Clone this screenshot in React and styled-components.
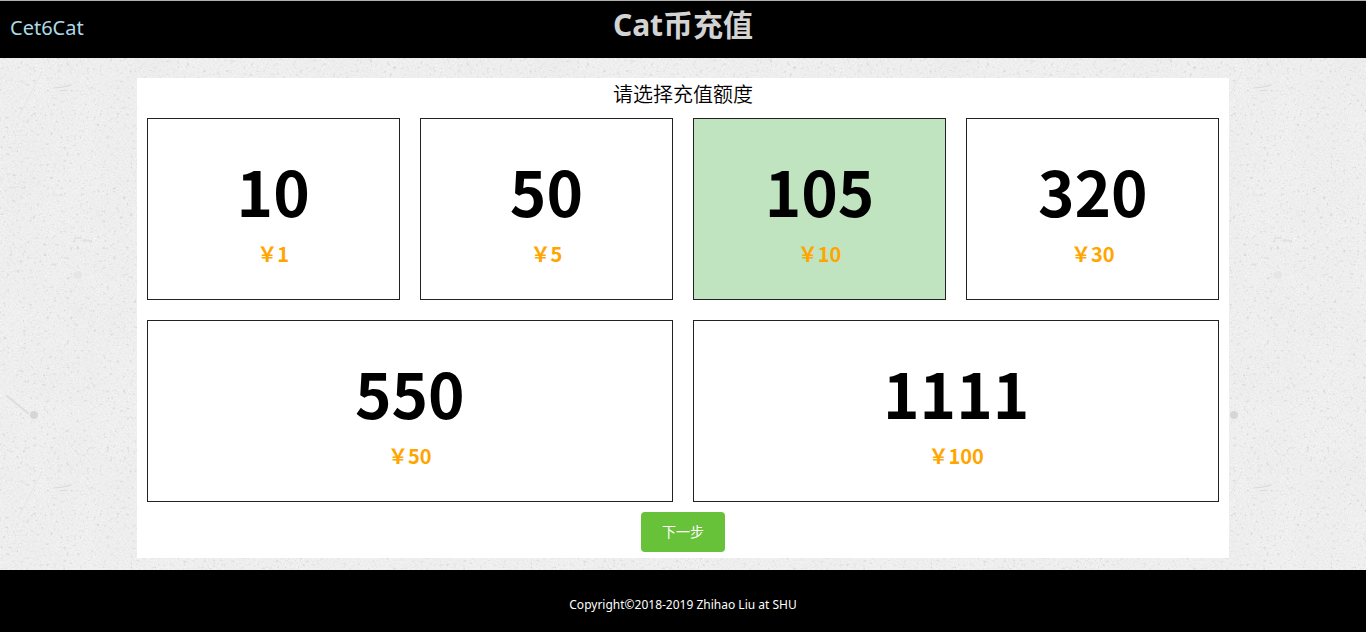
import React, { useState } from "react";
import styled, { createGlobalStyle } from "styled-components";

const texture = `
<svg xmlns="http://www.w3.org/2000/svg" width="400" height="400">
  <filter id="grain" x="0" y="0" width="100%" height="100%" color-interpolation-filters="sRGB">
    <feTurbulence type="fractalNoise" baseFrequency="0.6" numOctaves="3" seed="7" stitchTiles="stitch"/>
    <feColorMatrix values="0.08 0 0 0 0.897  0.08 0 0 0 0.897  0.08 0 0 0 0.897  0 0 0 0 1"/>
  </filter>
  <filter id="specks" x="0" y="0" width="100%" height="100%" color-interpolation-filters="sRGB">
    <feTurbulence type="fractalNoise" baseFrequency="0.3" numOctaves="4" seed="21" stitchTiles="stitch"/>
    <feColorMatrix values="0 0 0 0 0.72  0 0 0 0 0.72  0 0 0 0 0.72  0 5 0 0 -3.2"/>
  </filter>
  <filter id="clouds" x="0" y="0" width="100%" height="100%" color-interpolation-filters="sRGB">
    <feTurbulence type="fractalNoise" baseFrequency="0.02" numOctaves="4" seed="3" stitchTiles="stitch"/>
    <feColorMatrix values="0 0 0 0 0.8  0 0 0 0 0.8  0 0 0 0 0.8  0 1 0 0 -0.4"/>
  </filter>
  <rect width="400" height="400" filter="url(#grain)"/>
  <rect width="400" height="400" filter="url(#clouds)" opacity="0.15"/>
  <rect width="400" height="400" filter="url(#specks)" opacity="0.4"/>
  <g fill="none" stroke="#dedede" stroke-linecap="round">
    <path d="M7 -4L28 13" stroke-width="2"/>
    <path d="M7 396L14 401" stroke-width="2"/>
    <path d="M54 88l9-1 8-2M60 91l7-1" stroke="#d8d8d8"/>
    <path d="M58 64l3 9M66 64l10 7M86 84l7 11M42 72L18 118" stroke="#e6e6e6"/>
    <path d="M75 238h6M84 240l6 1" stroke="#e2e2e2" stroke-width="2"/>
  </g>
  <circle cx="34" cy="15" r="4" fill="#d6d6d6"/>
  <circle cx="78" cy="275" r="4" fill="#e6e6e6"/>
</svg>`;

const GlobalStyle = createGlobalStyle`
  * {
    box-sizing: border-box;
  }

  body {
    margin: 0;
    font-family: "Noto Sans", "Noto Sans CJK SC", sans-serif;
    background: #efefef url("data:image/svg+xml,${encodeURIComponent(texture)}");
  }
`;

const Page = styled.div`
  display: flex;
  flex-direction: column;
  min-height: 100vh;
`;

const Header = styled.header`
  display: grid;
  grid-template-columns: 1fr auto 1fr;
  align-items: start;
  height: 58px;
  padding: 0 10px;
  border-top: 1px solid #b0b0b0;
  background: #000;
`;

const Brand = styled.a`
  justify-self: start;
  color: lightblue;
  font-size: 20px;
  line-height: 54px;
  text-decoration: none;
`;

const Title = styled.h1`
  margin: 0;
  color: lightgray;
  font-size: 30px;
  line-height: 48px;
`;

const Main = styled.main`
  flex: 1;
  padding: 20px 0 12px;
`;

const Panel = styled.form`
  display: flex;
  flex-direction: column;
  align-items: center;
  width: 80%;
  margin: 0 auto;
  padding: 4px 0 6px;
  background: #fff;
`;

const Options = styled.fieldset`
  display: grid;
  grid-template-columns: repeat(4, 1fr);
  gap: 20px;
  width: 100%;
  margin: 0;
  padding: 10px;
  border: 0;
`;

const Prompt = styled.h2`
  margin: 0;
  font-size: 20px;
  font-weight: 350;
  line-height: 26px;
`;

const Option = styled.label`
  display: flex;
  flex-direction: column;
  align-items: center;
  grid-column: span ${(p) => (p.$wide ? 2 : 1)};
  height: 182px;
  padding-top: 30px;
  border: 1px solid #222;
  background: ${(p) => (p.$selected ? "#c0e4c0" : "#fff")};
  font-family: "Noto Sans CJK SC", sans-serif;
  font-weight: bold;
  cursor: pointer;
`;

const Radio = styled.input`
  appearance: none;
  width: 0;
  height: 0;
  margin: 0;
`;

const Amount = styled.span`
  margin-bottom: 8px;
  font-size: 62px;
  line-height: 82px;
`;

const Price = styled.span`
  color: orange;
  font-size: 20px;
  line-height: 30px;
`;

const NextButton = styled.button`
  height: 40px;
  padding: 0 21px 2px;
  border: 0;
  border-radius: 4px;
  background: #67c23a;
  color: #fff;
  font-family: inherit;
  font-size: 14px;
  cursor: pointer;
`;

const Footer = styled.footer`
  padding: 25px 0 17px;
  background: #000;
  color: #fff;
  font-size: 12px;
  line-height: 20px;
  text-align: center;
`;

const plans = [
  { amount: 10, price: 1 },
  { amount: 50, price: 5 },
  { amount: 105, price: 10 },
  { amount: 320, price: 30 },
  { amount: 550, price: 50, wide: true },
  { amount: 1111, price: 100, wide: true },
];

export default function App() {
  const [selected, setSelected] = useState(105);

  return (
    <Page lang="zh-CN">
      <GlobalStyle />
      <Header>
        <Brand href="#">Cet6Cat</Brand>
        <Title>Cat币充值</Title>
      </Header>
      <Main>
        <Panel onSubmit={(e) => e.preventDefault()}>
          <Prompt id="prompt">请选择充值额度</Prompt>
          <Options aria-labelledby="prompt">
            {plans.map(({ amount, price, wide }) => (
              <Option key={amount} $wide={wide} $selected={selected === amount}>
                <Radio
                  type="radio"
                  name="amount"
                  value={amount}
                  checked={selected === amount}
                  onChange={() => setSelected(amount)}
                />
                <Amount>{amount}</Amount>
                <Price>￥{price}</Price>
              </Option>
            ))}
          </Options>
          <NextButton type="submit">下一步</NextButton>
        </Panel>
      </Main>
      <Footer>Copyright©2018-2019 Zhihao Liu at SHU</Footer>
    </Page>
  );
}
